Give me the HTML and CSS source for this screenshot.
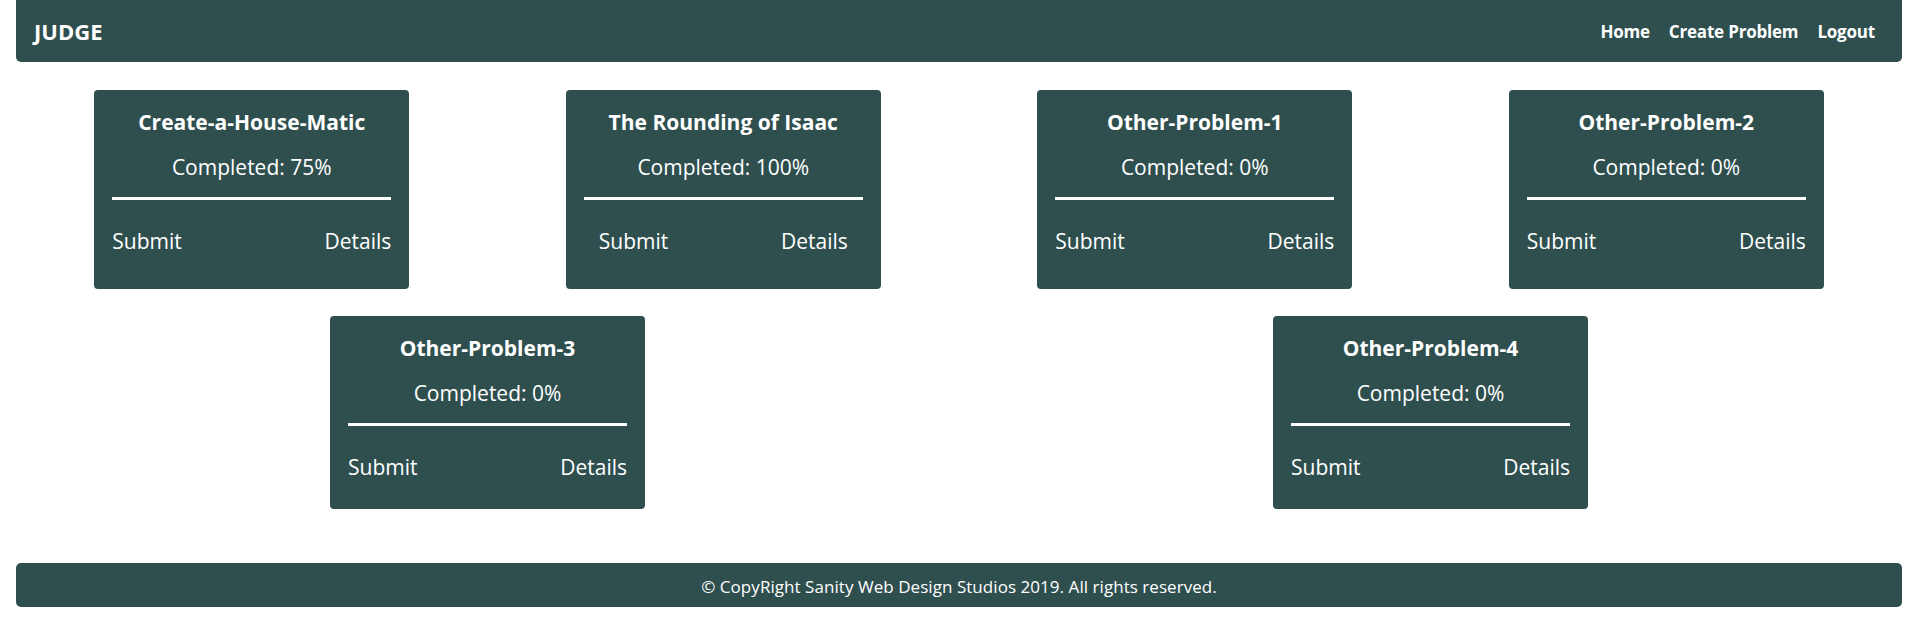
FILE: index.html
```html
<!DOCTYPE html>
<html lang="en">
<head>
<meta charset="utf-8">
<title>Judge</title>
<link rel="stylesheet" href="styles.css">
</head>
<body>
<header class="navbar">
  <a class="brand" href="#">JUDGE</a>
  <nav class="nav-links">
    <a href="#">Home</a>
    <a href="#">Create Problem</a>
    <a href="#">Logout</a>
  </nav>
</header>
<main class="problems">
  <div class="card">
    <h2 class="card-title">Create-a-House-Matic</h2>
    <p class="card-progress">Completed: 75%</p>
    <hr class="card-rule">
    <div class="card-links"><a href="#">Submit</a><a href="#">Details</a></div>
  </div>
  <div class="card">
    <h2 class="card-title">The Rounding of Isaac</h2>
    <p class="card-progress">Completed: 100%</p>
    <hr class="card-rule">
    <div class="card-links card-links--inset"><a href="#">Submit</a><a href="#">Details</a></div>
  </div>
  <div class="card">
    <h2 class="card-title">Other-Problem-1</h2>
    <p class="card-progress">Completed: 0%</p>
    <hr class="card-rule">
    <div class="card-links"><a href="#">Submit</a><a href="#">Details</a></div>
  </div>
  <div class="card">
    <h2 class="card-title">Other-Problem-2</h2>
    <p class="card-progress">Completed: 0%</p>
    <hr class="card-rule">
    <div class="card-links"><a href="#">Submit</a><a href="#">Details</a></div>
  </div>
  <div class="card">
    <h2 class="card-title">Other-Problem-3</h2>
    <p class="card-progress">Completed: 0%</p>
    <hr class="card-rule">
    <div class="card-links"><a href="#">Submit</a><a href="#">Details</a></div>
  </div>
  <div class="card">
    <h2 class="card-title">Other-Problem-4</h2>
    <p class="card-progress">Completed: 0%</p>
    <hr class="card-rule">
    <div class="card-links"><a href="#">Submit</a><a href="#">Details</a></div>
  </div>
</main>
<footer class="footer">© CopyRight Sanity Web Design Studios 2019. All rights reserved.</footer>
</body>
</html>
```
FILE: styles.css
```css
* { box-sizing: border-box; }
html, body { background: #ffffff; }
body {
  margin: 0;
  padding: 0 15px 0 16px;
  font-family: "Open Sans", "Noto Sans", sans-serif;
  color: #ffffff;
}
a { color: #ffffff; text-decoration: none; }

.navbar {
  height: 62px;
  background: #2f4f4f;
  border-radius: 0 0 5px 5px;
  display: flex;
  align-items: center;
  justify-content: space-between;
  padding: 0 27px 0 18px;
}
.brand {
  font-size: 22px;
  font-weight: 700;
}
.nav-links {
  display: flex;
  gap: 19px;
  font-size: 17px;
  font-weight: 700;
  letter-spacing: -0.2px;
}

.problems {
  display: flex;
  flex-wrap: wrap;
  justify-content: space-around;
  row-gap: 27px;
  padding: 28px 0 54px;
}
.card {
  width: 315px;
  margin: 0 40px;
  background: #2f4f4f;
  border-radius: 4px;
  padding: 0 18px;
  text-align: center;
  display: flex;
  flex-direction: column;
}
.card-title {
  margin: 0;
  padding-top: 18px;
  font-size: 21px;
  font-weight: 700;
  line-height: 28px;
}
.card-progress {
  margin: 0;
  padding-top: 17px;
  font-size: 21px;
  line-height: 28px;
}
.card-rule {
  margin: 16px 0 0;
  border: 0;
  height: 3px;
  background: #ffffff;
}
.card-links {
  display: flex;
  justify-content: space-between;
  padding: 27px 0 28px;
  font-size: 21px;
  line-height: 28px;
}
.card-links--inset {
  padding: 27px 15px 34px;
}

.footer {
  height: 44px;
  background: #2f4f4f;
  border-radius: 5px;
  display: flex;
  align-items: center;
  justify-content: center;
  padding-top: 3px;
  font-size: 17px;
  letter-spacing: 0.05px;
}
```
